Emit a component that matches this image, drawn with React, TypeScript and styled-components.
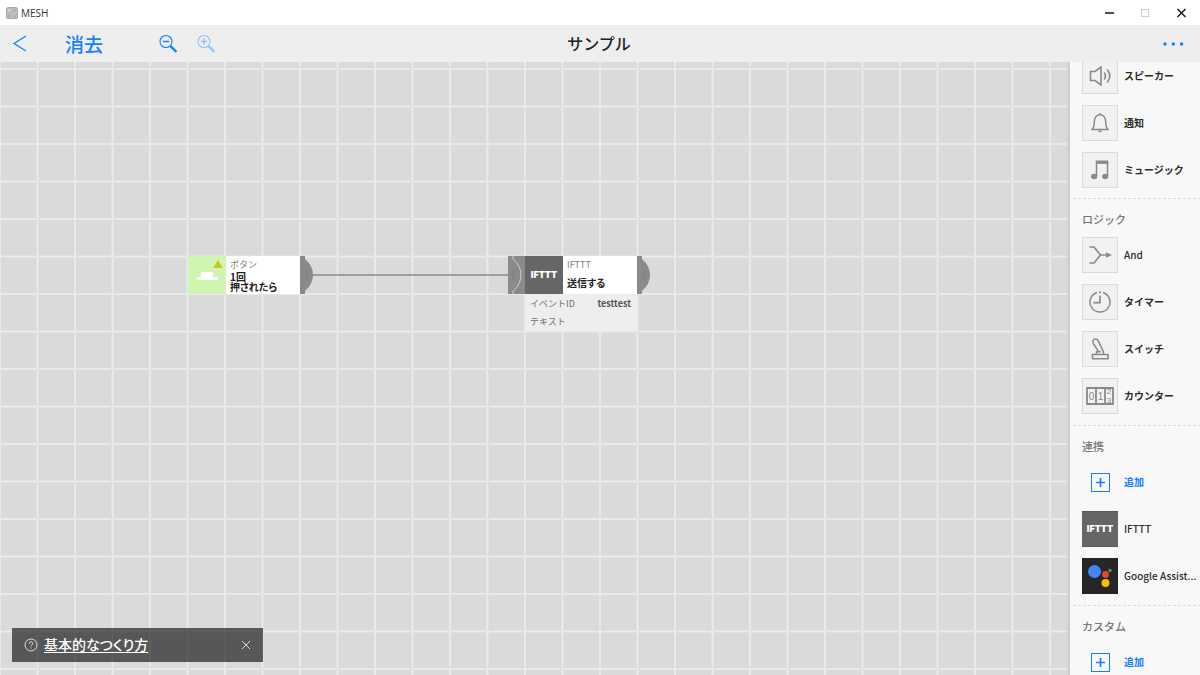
import React from 'react';
import styled, { createGlobalStyle, css } from 'styled-components';

const BLUE = '#1480ff';
const GREY = '#8a8a8a';

const GlobalStyle = createGlobalStyle`
  *, *::before, *::after { box-sizing: border-box; }
  body {
    margin: 0;
    font-family: "Noto Sans CJK JP", "Noto Sans", sans-serif;
    color: #222;
  }
  button {
    font: inherit;
    color: inherit;
    background: none;
    border: 0;
    padding: 0;
    cursor: pointer;
  }
  h1, h2, p, ul, dl, dd { margin: 0; padding: 0; }
  svg { display: block; flex: none; }
`;

const Window = styled.div`
  display: flex;
  flex-direction: column;
  height: 100vh;
  overflow: hidden;
  background: #fff;
`;

const TitleBar = styled.div`
  display: flex;
  align-items: center;
  justify-content: space-between;
  height: 25px;
  flex: none;
  padding: 0 13px 0 6px;
`;

const AppName = styled.div`
  display: flex;
  align-items: center;
  gap: 3px;
  font: 10px/14px "Open Sans", "Noto Sans", sans-serif;
  color: #333;
`;

const WindowControls = styled.div`
  display: flex;
  gap: 24px;
`;

const Header = styled.header`
  display: grid;
  grid-template-columns: 1fr auto 1fr;
  align-items: center;
  height: 37px;
  flex: none;
  padding: 0 14px 0 12px;
  background: #eee;
`;

const Tools = styled.div`
  display: flex;
  align-items: center;
  color: ${BLUE};
`;

const ClearButton = styled.button`
  margin: 0 55px 0 37px;
  font-size: 19px;
  line-height: 28px;
  font-weight: 500;
`;

const ZoomButton = styled.button`
  margin-right: 18px;
  &:disabled { opacity: 0.4; }
`;

const Title = styled.h1`
  padding-bottom: 2px;
  font-size: 16px;
  line-height: 22px;
  font-weight: 500;
`;

const MoreButton = styled.button`
  justify-self: end;
`;

const Body = styled.div`
  display: flex;
  flex: 1;
  min-height: 0;
`;

const line = '#e9e9e9';
const soft = '#e1e1e1';
const stops = `${line} 2px, transparent 2px 37px, ${soft} 37px 38px, #ececec 38px 39px, ${soft} 39px 40px, transparent 40px`;

const Canvas = styled.main`
  position: relative;
  flex: 1;
  min-width: 0;
  overflow: hidden;
  background-color: #dadada;
  background-image:
    linear-gradient(to right, ${stops}),
    linear-gradient(to bottom, ${stops});
  background-size: 75px 75px;
  background-position: -1px 6px;
`;

const Wire = styled.svg`
  position: absolute;
  left: 312px;
  top: 211px;
`;

const Node = styled.article<{ $x: number; $y: number }>`
  position: absolute;
  left: ${(p) => p.$x}px;
  top: ${(p) => p.$y}px;
  display: flex;
  align-items: flex-start;
`;

const NodeBody = styled.div`
  width: 112px;
`;

const NodeHead = styled.div`
  display: flex;
  height: 38px;
  background: #fff;
`;

const NodeIcon = styled.div<{ $color: string }>`
  display: flex;
  align-items: center;
  justify-content: center;
  width: 38px;
  flex: none;
  background: ${(p) => p.$color};
`;

const NodeText = styled.div<{ $loose?: boolean }>`
  display: flex;
  flex-direction: column;
  gap: ${(p) => (p.$loose ? 8 : 2)}px;
  padding: 4px 0 0 4px;
  font-size: 10px;
  line-height: 10px;
`;

const NodeType = styled.span`
  font-size: 9px;
  color: #808080;
`;

const NodeAction = styled.span`
  display: block;
  font-weight: 700;
  color: #222;
  white-space: nowrap;
  font-feature-settings: "palt";
`;

const ActionLine = styled.span`
  display: block;
`;

const NodeDetails = styled.dl`
  padding: 1px 6px 0 5px;
  background: #eee;
  font-size: 9px;
  line-height: 18px;
  color: #6e6e6e;
`;

const Detail = styled.div`
  display: flex;
  justify-content: space-between;
  dd { font-weight: 700; color: #555; }
`;

const Toast = styled.div`
  position: absolute;
  left: 12px;
  bottom: 13px;
  display: flex;
  align-items: center;
  width: 251px;
  height: 34px;
  padding: 0 12px;
  background: rgba(0, 0, 0, 0.6);
  color: #fff;
`;

const ToastLink = styled.a`
  margin: 0 auto 2px 6px;
  font-size: 14px;
  line-height: 20px;
  font-weight: 500;
  color: inherit;
  font-feature-settings: "palt";
  text-underline-offset: 2px;
`;

const Sidebar = styled.aside`
  width: 130px;
  flex: none;
  overflow: hidden;
  background: #f8f8f8;
`;

const SidebarEdge = styled.div`
  width: 3px;
  flex: none;
  background: linear-gradient(to right, #d4d4d4, #cccccc);
`;

const Blocks = styled.div`
  margin-top: -10px;
`;

const Group = styled.section`
  padding-bottom: 7px;
  background: repeating-linear-gradient(to right, #dcdcdc 0 3px, transparent 3px 5px) 3px 100% / 100% 1px no-repeat;
  &:first-child { padding-bottom: 6px; }
`;

const GroupTitle = styled.h2`
  padding: 10px 0 2px 12px;
  font-size: 11px;
  line-height: 20px;
  font-weight: 500;
  color: #777;
`;

const Block = styled.button<{ $add?: boolean; $medium?: boolean }>`
  display: flex;
  align-items: center;
  gap: 6px;
  width: 100%;
  height: 47px;
  padding-left: 12px;
  font-size: 10px;
  line-height: 16px;
  font-weight: ${(p) => (p.$medium ? 500 : 700)};
  color: ${(p) => (p.$add ? BLUE : '#2c2c2c')};
  text-align: left;
  white-space: nowrap;
`;

const Tile = styled.span<{ $tone?: 'plain' | 'add' | 'ifttt' | 'google' }>`
  display: flex;
  align-items: center;
  justify-content: center;
  width: 36px;
  height: 36px;
  flex: none;
  color: ${GREY};
  ${(p) =>
    (p.$tone ?? 'plain') === 'plain' &&
    css`background: #f1f1f1; border: 1px solid #dadada;`}
  ${(p) =>
    p.$tone === 'ifttt' &&
    css`background: #666; border: 1px solid #5a5a5a; border-width: 1px 0;`}
  ${(p) => p.$tone === 'google' && css`background: #262626;`}
  ${(p) => p.$tone === 'add' && css`color: ${BLUE};`}
`;

const IftttMark = styled.span<{ $size: number }>`
  font: 900 ${(p) => p.$size}px/12px Inter, sans-serif;
  color: #fff;
`;

const Drawing = ({ w, h, label, children }: { w: number; h: number; label?: string; children: React.ReactNode }) => (
  <svg
    width={w}
    height={h}
    viewBox={`0 0 ${w} ${h}`}
    fill="none"
    stroke="currentColor"
    aria-hidden={label ? undefined : true}
    aria-label={label}
  >
    {children}
  </svg>
);

const AppLogo = () => (
  <Drawing w={12} h={12}>
    <rect x=".5" y=".5" width="11" height="11" rx="1.5" fill="#bdbdbd" stroke="#a8a8a8" />
    <circle cx="8.5" cy="3.2" r="1" fill="#6dcc6d" stroke="none" />
    <circle cx="3" cy="3.2" r="1" fill="#e6e6e6" stroke="none" />
    <circle cx="3" cy="9" r="1" fill="#67b7d8" stroke="none" />
    <circle cx="8.5" cy="9" r="1" fill="#e89a70" stroke="none" />
  </Drawing>
);

const Magnifier = ({ plus }: { plus?: boolean }) => (
  <Drawing w={20} h={20}>
    <circle cx="8" cy="7.5" r="6" strokeWidth="1.1" />
    <path d={plus ? 'M4.800 7.500h6.400M8 4.300v6.400' : 'M4.800 7.500h6.400'} strokeWidth="1.5" />
    <path d="M12 11.500l1.500 1.500" strokeWidth="1.2" />
    <path d="M12.800 12.300l5.700 5.700" strokeWidth="2.4" />
  </Drawing>
);

const SpeakerIcon = () => (
  <Drawing w={24} h={20}>
    <path d="M2.500 5.500h4.500L13 1v18L7 14.500H2.500z" strokeWidth="1.600" />
    <path d="M16.200 6.500q2.400 3.500 0 7M19.200 3.500q5.200 6.500 0 13" strokeWidth="1.600" />
  </Drawing>
);

const BellIcon = () => (
  <Drawing w={18} h={20}>
    <path d="M1 16.500h16c-2-2-2.300-4-2.300-8C14.700 4.200 12 1.800 9 1.800S3.300 4.200 3.300 8.500C3.300 12.500 3 14.500 1 16.500z" strokeWidth="1.500" />
    <path d="M9 .2V2" strokeWidth="2" />
    <path d="M7 17.500a2 1.800 0 0 0 4 0z" fill="currentColor" stroke="none" />
  </Drawing>
);

const MusicIcon = () => (
  <Drawing w={20} h={20}>
    <path d="M6.500 16V1.500h11V16" strokeWidth="1.500" />
    <path d="M6 2.300h12.200" strokeWidth="3.200" />
    <ellipse cx="4.200" cy="16.500" rx="3.100" ry="2.800" fill="currentColor" stroke="none" />
    <ellipse cx="15.200" cy="16.500" rx="3.100" ry="2.800" fill="currentColor" stroke="none" />
  </Drawing>
);

const AndIcon = () => (
  <Drawing w={24} h={18}>
    <path d="M1.500 1H6l6.500 8L6 17H1.500M12.500 9h7" strokeWidth="1.700" />
    <path d="M18 6.300L24 9l-6 2.700z" fill="currentColor" stroke="none" />
  </Drawing>
);

const TimerIcon = () => (
  <Drawing w={22} h={22}>
    <path d="M8 1.500A10 10 0 1 0 14 1.500" strokeWidth="1.500" />
    <path d="M11 .3V2.300M11 4.500V11.700H4.500" strokeWidth="1.700" />
  </Drawing>
);

const SwitchIcon = () => (
  <Drawing w={18} h={22}>
    <path d="M1.500 16.500h15.500v4.200H1.500z" strokeWidth="1.600" />
    <path d="M5.500 16.500v-2.700h2.300L2.200 5.500C1.300 3 2.300 1 4.300 1s2.700.9 3.300 2.700L12.500 13.800v2.700M7.800 13.800h2" strokeWidth="1.500" strokeLinejoin="round" />
  </Drawing>
);

const CounterIcon = () => (
  <Drawing w={28} h={18}>
    <g fill="currentColor" stroke="none" fontFamily="Liberation Sans, sans-serif" fontSize="10" fontWeight="400" textAnchor="middle">
      <text x="5.500" y="13">0</text>
      <text x="14.500" y="13">1</text>
      <text x="23" y="7" fontSize="8">2</text>
      <text x="23" y="16" fontSize="8">3</text>
    </g>
    <path d="M1 1h26v16H1zM10 1v16M19 1v16" strokeWidth="1.800" />
  </Drawing>
);

const AddIcon = () => (
  <Drawing w={20} h={20}>
    <rect x="1.500" y="1.500" width="18" height="18" strokeWidth="1" />
    <path d="M6 10.500h9M10.500 6v9" strokeWidth="1.700" />
  </Drawing>
);

const AssistantIcon = () => (
  <Drawing w={36} h={36}>
    <g stroke="none">
      <circle cx="12.500" cy="13.500" r="6.500" fill="#4285f4" />
      <circle cx="23.500" cy="16.500" r="3.400" fill="#ea4335" />
      <circle cx="28" cy="12.500" r="1.700" fill="#34a853" />
      <circle cx="23.500" cy="25" r="4" fill="#fbbc05" />
    </g>
  </Drawing>
);

const ButtonTagIcon = () => (
  <Drawing w={38} h={38}>
    <path d="M13 16h12v5h5v3H9v-3h4z" fill="#fff" stroke="none" />
    <path d="M30 4l5 8H25z" fill="#c8cc28" stroke="none" />
    <path d="M30 6.500v3M30 10.300v1" stroke="#b2b020" strokeWidth=".8" />
  </Drawing>
);

const OutputPort = () => (
  <Drawing w={13} h={38}>
    <path d="M0 0h5v3q8 7 8 16t-8 16v3H0z" fill={GREY} stroke="none" />
    <path d="M5.500 14v10M7.500 14v10" stroke="#808080" strokeWidth=".8" />
  </Drawing>
);

const InputPort = () => (
  <Drawing w={17} h={38}>
    <path d="M0 0h17v38H0z" fill={GREY} stroke="none" />
    <path d="M5 0v3q8 7 8 16t-8 16v3" stroke="#cfcfcf" />
    <path d="M4.500 14v10M6.500 14v10" stroke="#808080" strokeWidth=".8" />
  </Drawing>
);

type Item = {
  label: string;
  icon: React.ReactNode;
  tone?: 'plain' | 'add' | 'ifttt' | 'google';
  latin?: boolean;
};

const groups: { title?: string; items: Item[] }[] = [
  {
    items: [
      { label: 'スピーカー', icon: <SpeakerIcon /> },
      { label: '通知', icon: <BellIcon /> },
      { label: 'ミュージック', icon: <MusicIcon /> },
    ],
  },
  {
    title: 'ロジック',
    items: [
      { label: 'And', icon: <AndIcon />, latin: true },
      { label: 'タイマー', icon: <TimerIcon /> },
      { label: 'スイッチ', icon: <SwitchIcon /> },
      { label: 'カウンター', icon: <CounterIcon /> },
    ],
  },
  {
    title: '連携',
    items: [
      { label: '追加', icon: <AddIcon />, tone: 'add' },
      { label: 'IFTTT', icon: <IftttMark $size={9} aria-hidden>IFTTT</IftttMark>, tone: 'ifttt', latin: true },
      { label: 'Google Assist...', icon: <AssistantIcon />, tone: 'google', latin: true },
    ],
  },
  {
    title: 'カスタム',
    items: [{ label: '追加', icon: <AddIcon />, tone: 'add' }],
  },
];

export default function App() {
  return (
    <Window>
      <GlobalStyle />
      <TitleBar>
        <AppName>
          <AppLogo />
          MESH
        </AppName>
        <WindowControls>
          <button aria-label="最小化">
            <Drawing w={12} h={12}><path d="M2 6h9" stroke="#111" strokeWidth="1.500" /></Drawing>
          </button>
          <button aria-label="最大化" disabled>
            <Drawing w={12} h={12}><rect x="2.500" y="2.500" width="7" height="7" stroke="#ccc" /></Drawing>
          </button>
          <button aria-label="閉じる">
            <Drawing w={12} h={12}><path d="M2.500 2l8 8M10.500 2l-8 8" stroke="#111" strokeWidth="1.400" /></Drawing>
          </button>
        </WindowControls>
      </TitleBar>
      <Header>
        <Tools>
          <button aria-label="戻る">
            <Drawing w={16} h={18}><path d="M14 1L2 8.500l12 7.500" strokeWidth="1.300" /></Drawing>
          </button>
          <ClearButton>消去</ClearButton>
          <ZoomButton aria-label="縮小"><Magnifier /></ZoomButton>
          <ZoomButton aria-label="拡大" disabled><Magnifier plus /></ZoomButton>
        </Tools>
        <Title>サンプル</Title>
        <MoreButton aria-label="メニュー">
          <Drawing w={24} h={6}>
            <g fill={BLUE} stroke="none">
              <circle cx="3" cy="3" r="1.700" />
              <circle cx="11.300" cy="3" r="1.700" />
              <circle cx="19.600" cy="3" r="1.700" />
            </g>
          </Drawing>
        </MoreButton>
      </Header>
      <Body>
        <Canvas>
          <Wire width={196} height={4} aria-hidden>
            <path d="M0 2h196" stroke={GREY} strokeWidth="1.500" />
          </Wire>
          <Node $x={188} $y={194}>
            <NodeBody>
              <NodeHead>
                <NodeIcon $color="#d0f5b0"><ButtonTagIcon /></NodeIcon>
                <NodeText>
                  <NodeType>ボタン</NodeType>
                  <NodeAction>
                    <ActionLine>1回</ActionLine>
                    <ActionLine>押されたら</ActionLine>
                  </NodeAction>
                </NodeText>
              </NodeHead>
            </NodeBody>
            <OutputPort />
          </Node>
          <Node $x={508} $y={194}>
            <InputPort />
            <NodeBody>
              <NodeHead>
                <NodeIcon $color="#666"><IftttMark $size={9} aria-hidden>IFTTT</IftttMark></NodeIcon>
                <NodeText $loose>
                  <NodeType>IFTTT</NodeType>
                  <NodeAction>送信する</NodeAction>
                </NodeText>
              </NodeHead>
              <NodeDetails>
                <Detail><dt>イベントID</dt><dd>testtest</dd></Detail>
                <Detail><dt>テキスト</dt></Detail>
              </NodeDetails>
            </NodeBody>
            <OutputPort />
          </Node>
          <Toast>
            <Drawing w={14} h={14}>
              <circle cx="7" cy="7" r="6" stroke="#ddd" />
              <path d="M5.200 5.700q0-1.900 1.800-1.900t1.800 1.700q0 .9-.9 1.400t-.9 1.500M7 9.500v1.100" stroke="#ddd" />
            </Drawing>
            <ToastLink href="#basics">基本的なつくり方</ToastLink>
            <button aria-label="閉じる">
              <Drawing w={10} h={10}><path d="M1 1l8 8M9 1L1 9" stroke="#ddd" /></Drawing>
            </button>
          </Toast>
        </Canvas>
        <SidebarEdge />
        <Sidebar>
          <Blocks>
            {groups.map((group, i) => (
              <Group key={i}>
                {group.title && <GroupTitle>{group.title}</GroupTitle>}
                {group.items.map((item) => (
                  <Block key={item.label} $add={item.tone === 'add'} $medium={item.latin}>
                    <Tile $tone={item.tone}>{item.icon}</Tile>
                    {item.label}
                  </Block>
                ))}
              </Group>
            ))}
          </Blocks>
        </Sidebar>
      </Body>
    </Window>
  );
}
